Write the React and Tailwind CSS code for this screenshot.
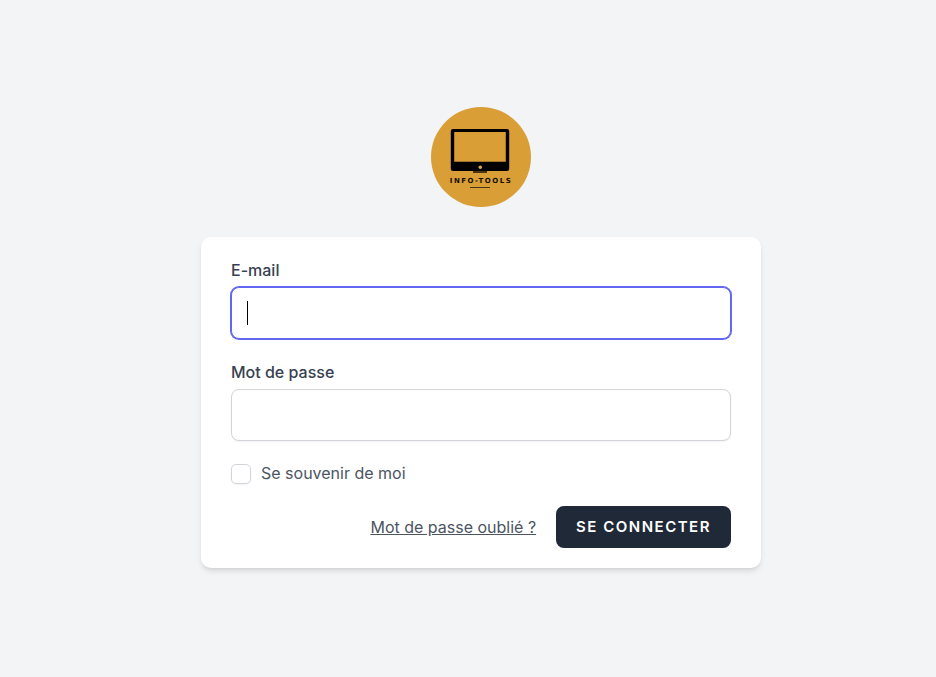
import { useState } from "react";

function Logo() {
  return (
    <svg viewBox="0 0 100 100" className="size-[100px]" role="img" aria-label="Info-Tools">
      <circle cx="50" cy="50" r="50" fill="#d99e36" />
      <path
        fillRule="evenodd"
        d="M22 22h54a2.200 2.200 0 0 1 2.200 2.200v37.600a2.200 2.200 0 0 1-2.200 2.200H22a2.200 2.200 0 0 1-2.200-2.200V24.200a2.200 2.200 0 0 1 2.200-2.200zM23.200 25v29.800h51.600V25z"
        fill="#000"
      />
      <circle cx="49.300" cy="60.300" r="1.700" fill="#e0a84a" />
      <path d="M42 64h14v2H42z" fill="#4a3510" />
      <text
        x="50"
        y="76"
        textAnchor="middle"
        fontFamily="'DejaVu Sans', sans-serif"
        fontWeight="700"
        fontSize="7"
        letterSpacing="1.5"
        fill="#140e02"
      >
        INFO-TOOLS
      </text>
      <path d="M39 80.500h20" stroke="#3a2a0c" strokeWidth="0.900" />
    </svg>
  );
}

function Field({ id, label, children }) {
  return (
    <div className="flex flex-col gap-1">
      <label htmlFor={id} className="text-base leading-[26px] font-medium text-[#374151]">
        {label}
      </label>
      {children}
    </div>
  );
}

const inputClass =
  "h-[52px] w-full rounded-lg border border-[#d1d5db] bg-white px-[15px] text-xl text-black shadow-xs outline-none focus:border-[#6366f1] focus:ring-1 focus:ring-[#6366f1]";

export default function App() {
  const [email, setEmail] = useState("");
  const [password, setPassword] = useState("");

  return (
    <main className="flex min-h-screen flex-col items-center justify-center gap-[30px] bg-[#f3f4f6] pb-0.5 pl-[26px] font-['Inter',sans-serif]">
      <a href="#accueil">
        <Logo />
      </a>
      <form
        onSubmit={(event) => event.preventDefault()}
        className="flex w-full max-w-[560px] flex-col gap-5 rounded-[10px] bg-white px-[30px] py-5 shadow-md"
      >
        <Field id="email" label="E-mail">
          <div className="relative">
            <input
              id="email"
              type="email"
              autoFocus
              value={email}
              onChange={(event) => setEmail(event.target.value)}
              className={`peer ${inputClass} ${email ? "" : "caret-transparent"}`}
            />
            {!email && (
              <span
                aria-hidden="true"
                className="pointer-events-none absolute inset-y-0 left-4 my-auto hidden h-6 w-px bg-black peer-focus:block"
              />
            )}
          </div>
        </Field>
        <Field id="password" label="Mot de passe">
          <input
            id="password"
            type="password"
            value={password}
            onChange={(event) => setPassword(event.target.value)}
            className={inputClass}
          />
        </Field>
        <label htmlFor="remember" className="flex items-center gap-[10px] text-base leading-[25px] text-[#4b5563]">
          <input
            id="remember"
            type="checkbox"
            className="size-5 appearance-none rounded-[5px] border border-[#d1d5db] bg-white shadow-xs checked:bg-[#4f46e5]"
          />
          Se souvenir de moi
        </label>
        <div className="flex items-center justify-end gap-5">
          <a href="#oubli" className="text-base leading-[26px] text-[#4b5563] underline">
            Mot de passe oublié ?
          </a>
          <button
            type="submit"
            className="h-[42px] rounded-lg bg-[#1f2937] px-5 text-[15px] font-semibold tracking-widest text-white uppercase"
          >
            Se connecter
          </button>
        </div>
      </form>
    </main>
  );
}
